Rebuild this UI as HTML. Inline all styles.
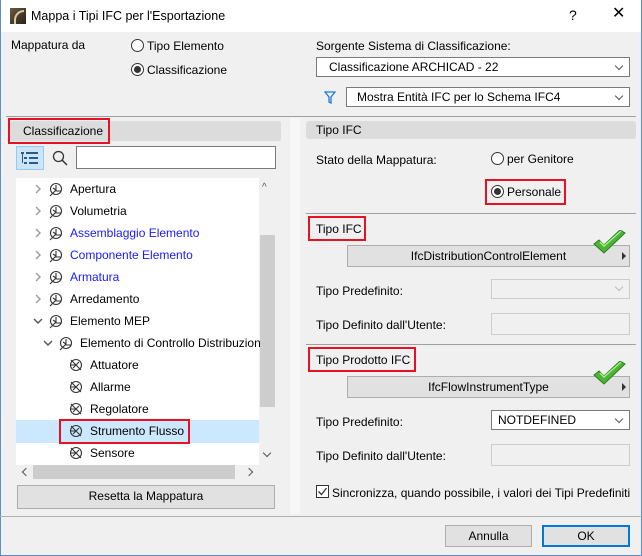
<!DOCTYPE html>
<html><head><meta charset="utf-8"><style>
*{box-sizing:border-box;margin:0;padding:0}
body{width:642px;height:556px;overflow:hidden;background:#f0f0f0;font-family:"Liberation Sans",sans-serif;font-size:12px;color:#000;position:relative}
.a{position:absolute}
.t{position:absolute;white-space:nowrap;line-height:14px}
.line{position:absolute;height:1px;background:#a0a0a0}
.combo{position:absolute;background:#fff;border:1px solid #7a7a7a;padding-left:10px;line-height:18px}
.combo:after{content:"";position:absolute;right:7px;top:5px;width:5px;height:5px;border-right:1px solid #555;border-bottom:1px solid #555;transform:rotate(45deg)}
.red{position:absolute;border:2px solid #e81123}
.btn{position:absolute;background:#e1e1e1;border:1px solid #adadad;text-align:center;line-height:20px}
.radio{position:absolute;width:13px;height:13px;border:1px solid #333;border-radius:50%;background:#fff}
.radio.on:after{content:"";position:absolute;left:2px;top:2px;width:7px;height:7px;border-radius:50%;background:#333}
.row{position:absolute;left:16px;width:243px;height:22px}
.row span{position:absolute;top:4px;white-space:nowrap}
.chev{position:absolute;width:6px;height:6px;border-right:1.5px solid #999;border-bottom:1.5px solid #999}
.disp{position:absolute;background:#f0f0f0;border:1px solid #ccc}
</style></head><body>
<div class="a" style="left:0;top:0;width:642px;height:32px;background:#fff"></div>
<div class="a" style="left:0;top:0;width:1px;height:556px;background:#5a8fcf"></div>
<div class="a" style="right:0;top:0;width:1px;height:556px;background:#5a8fcf"></div>
<div class="a" style="left:0;bottom:0;width:642px;height:1px;background:#5a8fcf"></div>
<div class="a" style="left:10px;top:8px;width:16px;height:16px;background:linear-gradient(135deg,#6b5a44,#2b2117)"></div>
<div class="a" style="left:14px;top:10px;width:10px;height:14px;border:2px solid #d9c9a8;border-right:none;border-bottom:none;border-radius:10px 0 0 0"></div>
<div class="t" style="left:31px;top:9px;font-size:12.5px">Mappa i Tipi IFC per l'Esportazione</div>
<div class="t" style="left:569px;top:8px;font-size:14px">?</div>
<div class="t" style="left:612px;top:7px;font-size:16px">✕</div>

<div class="t" style="left:11px;top:38px">Mappatura da</div>
<div class="radio" style="left:131px;top:39px"></div><div class="t" style="left:147px;top:39px">Tipo Elemento</div>
<div class="radio on" style="left:131px;top:63px"></div><div class="t" style="left:147px;top:63px">Classificazione</div>

<div class="t" style="left:316px;top:39px">Sorgente Sistema di Classificazione:</div>
<div class="combo" style="left:316px;top:57px;width:314px;height:20px;padding-left:12px">Classificazione ARCHICAD - 22</div>
<svg class="a" style="left:324px;top:91px" width="12" height="13"><path d="M1 1H11L7 6V12L5 11V6Z" fill="none" stroke="#1e7bd6" stroke-width="1.3"/></svg>
<div class="combo" style="left:346px;top:87px;width:284px;height:20px">Mostra Entità IFC per lo Schema IFC4</div>
<div class="line" style="left:6px;top:116px;width:630px"></div>

<!-- left panel -->
<div class="a" style="left:10px;top:121px;width:271px;height:20px;background:#dcdcdc;border-radius:2px"></div>
<div class="t" style="left:23px;top:124px">Classificazione</div>
<div class="red" style="left:8px;top:118px;width:102px;height:26px"></div>
<div class="a" style="left:290px;top:118px;width:10px;height:396px;background:#f7f7f7"></div>
<div class="a" style="left:16px;top:146px;width:28px;height:24px;background:#cce4f7;border:1px solid #99c9ef"></div>
<svg class="a" style="left:21px;top:151px" width="18" height="14"><g fill="#2a5a8a"><rect x="0" y="1" width="3" height="2"/><rect x="5" y="1" width="12" height="2"/><rect x="3" y="6" width="3" height="2"/><rect x="8" y="6" width="9" height="2"/><rect x="3" y="11" width="3" height="2"/><rect x="8" y="11" width="9" height="2"/><rect x="1" y="3" width="1" height="9"/></g></svg>
<svg class="a" style="left:52px;top:150px" width="16" height="16"><circle cx="6.5" cy="6.5" r="5" fill="none" stroke="#333" stroke-width="1.3"/><path d="M10 10L15 15" stroke="#333" stroke-width="1.5"/></svg>
<div class="a" style="left:76px;top:146px;width:200px;height:23px;background:#fff;border:1px solid #7a7a7a"></div>

<div class="a" style="left:16px;top:178px;width:259px;height:287px;background:#fff"></div>
<div class="a" style="left:259px;top:178px;width:16px;height:287px;background:#f0f0f0"></div>
<div class="a" style="left:260px;top:235px;width:15px;height:172px;background:#cdcdcd"></div>
<div class="t" style="left:262px;top:181px;font-size:10px;color:#555">&#94;</div>
<div class="chev" style="left:264px;top:450px;transform:rotate(45deg);border-color:#555"></div>
<div class="a" style="left:16px;top:465px;width:259px;height:14px;background:#f0f0f0"></div>
<div class="a" style="left:33px;top:465px;width:202px;height:14px;background:#cdcdcd"></div>
<div class="chev" style="left:23px;top:469px;transform:rotate(135deg);border-color:#555"></div>
<div class="chev" style="left:246px;top:469px;transform:rotate(-45deg);border-color:#555"></div>

<div class="a" style="left:16px;top:420px;width:243px;height:23px;background:#cce8ff"></div>
<div class="red" style="left:59px;top:419px;width:131px;height:25px"></div>

<svg class="a" style="left:0;top:178px" width="260" height="287" font-family="Liberation Sans" font-size="12">
<defs><g id="k"><circle cx="7" cy="7" r="5.5" fill="none" stroke="#333" stroke-width="1.1"/><path d="M1 14L7 8M7 3V9H12M4 6L7 8" fill="none" stroke="#333" stroke-width="1.1"/></g>
<g id="l"><circle cx="7" cy="7" r="5.5" fill="none" stroke="#333" stroke-width="1.1"/><path d="M2 2L12 12M4 10L10 4M2 7H7" fill="none" stroke="#333" stroke-width="1.1"/></g></defs>
<g fill="none" stroke="#999" stroke-width="1.4">
<path d="M36 7L40 11L36 15"/><path d="M36 29L40 33L36 37"/><path d="M36 51L40 55L36 59"/><path d="M36 73L40 77L36 81"/><path d="M36 95L40 99L36 103"/><path d="M36 117L40 121L36 125"/>
<path d="M34 141L38 145L42 141" stroke="#555"/><path d="M44 163L48 167L52 163" stroke="#555"/></g>
<use href="#k" x="49" y="4"/><use href="#k" x="49" y="26"/><use href="#k" x="49" y="48"/><use href="#k" x="49" y="70"/><use href="#k" x="49" y="92"/><use href="#k" x="49" y="114"/><use href="#k" x="49" y="136"/><use href="#k" x="59" y="158"/>
<use href="#l" x="69" y="180"/><use href="#l" x="69" y="202"/><use href="#l" x="69" y="224"/><use href="#l" x="69" y="246"/><use href="#l" x="69" y="268"/>
<text x="70" y="15">Apertura</text><text x="70" y="37">Volumetria</text>
<text x="70" y="59" fill="#1a1aff">Assemblaggio Elemento</text><text x="70" y="81" fill="#1a1aff">Componente Elemento</text><text x="70" y="103" fill="#1a1aff">Armatura</text>
<text x="70" y="125">Arredamento</text><text x="70" y="147">Elemento MEP</text><text x="80" y="169">Elemento di Controllo Distribuzione</text>
<text x="90" y="191">Attuatore</text><text x="90" y="213">Allarme</text><text x="90" y="235">Regolatore</text><text x="90" y="257">Strumento Flusso</text><text x="90" y="279">Sensore</text>
</svg>
<div class="btn" style="left:17px;top:485px;width:258px;height:24px">Resetta la Mappatura</div>

<!-- right panel -->
<div class="a" style="left:306px;top:121px;width:330px;height:18px;background:#dcdcdc;border-radius:3px"></div>
<div class="t" style="left:316px;top:123px">Tipo IFC</div>
<div class="t" style="left:316px;top:153px">Stato della Mappatura:</div>
<div class="radio" style="left:491px;top:152px"></div><div class="t" style="left:507px;top:152px">per Genitore</div>
<div class="red" style="left:485px;top:179px;width:81px;height:26px"></div>
<div class="radio on" style="left:491px;top:185px"></div><div class="t" style="left:507px;top:185px">Personale</div>
<div class="line" style="left:306px;top:213px;width:330px"></div>

<div class="red" style="left:308px;top:216px;width:58px;height:25px"></div>
<div class="t" style="left:316px;top:222px">Tipo IFC</div>
<div class="btn" style="left:347px;top:245px;width:283px;height:22px">IfcDistributionControlElement</div>
<div class="a" style="left:622px;top:252px;border-left:4px solid #333;border-top:4px solid transparent;border-bottom:4px solid transparent"></div>
<svg class="a" style="left:592px;top:230px" width="36" height="28"><path d="M2 14L12 23L33 3L28 0L12 15L7 10Z" fill="#4cb535" stroke="#2a7a20" stroke-width="1"/><path d="M8 12L12 16L29 1" fill="none" stroke="#a6f08a" stroke-width="1.5"/></svg>
<div class="t" style="left:316px;top:284px">Tipo Predefinito:</div>
<div class="disp" style="left:491px;top:279px;width:139px;height:20px;border-color:#ccc"></div>
<div class="chev" style="left:616px;top:284px;transform:rotate(45deg);border-color:#bbb;border-width:1px"></div>
<div class="t" style="left:316px;top:318px">Tipo Definito dall'Utente:</div>
<div class="disp" style="left:491px;top:313px;width:139px;height:22px"></div>
<div class="line" style="left:306px;top:344px;width:330px"></div>

<div class="red" style="left:308px;top:347px;width:108px;height:25px"></div>
<div class="t" style="left:316px;top:353px">Tipo Prodotto IFC</div>
<div class="btn" style="left:347px;top:376px;width:283px;height:22px">IfcFlowInstrumentType</div>
<div class="a" style="left:622px;top:383px;border-left:4px solid #333;border-top:4px solid transparent;border-bottom:4px solid transparent"></div>
<svg class="a" style="left:592px;top:361px" width="36" height="28"><path d="M2 14L12 23L33 3L28 0L12 15L7 10Z" fill="#4cb535" stroke="#2a7a20" stroke-width="1"/><path d="M8 12L12 16L29 1" fill="none" stroke="#a6f08a" stroke-width="1.5"/></svg>
<div class="t" style="left:316px;top:415px">Tipo Predefinito:</div>
<div class="combo" style="left:491px;top:410px;width:139px;height:20px;padding-left:6px">NOTDEFINED</div>
<div class="t" style="left:316px;top:449px">Tipo Definito dall'Utente:</div>
<div class="disp" style="left:491px;top:444px;width:139px;height:22px"></div>
<div class="a" style="left:316px;top:485px;width:13px;height:13px;border:1px solid #333;background:#fff"></div>
<svg class="a" style="left:317px;top:486px" width="11" height="11"><path d="M1.5 5.5L4.5 8.5L9.5 2" fill="none" stroke="#333" stroke-width="1.3"/></svg>
<div class="t" style="left:332px;top:486px">Sincronizza, quando possibile, i valori dei Tipi Predefiniti</div>

<div class="line" style="left:0;top:516px;width:642px;background:#b0b0b0"></div>
<div class="btn" style="left:445px;top:525px;width:87px;height:22px">Annulla</div>
<div class="btn" style="left:542px;top:525px;width:88px;height:22px;border:2px solid #0078d7;line-height:18px">OK</div>
</body></html>
